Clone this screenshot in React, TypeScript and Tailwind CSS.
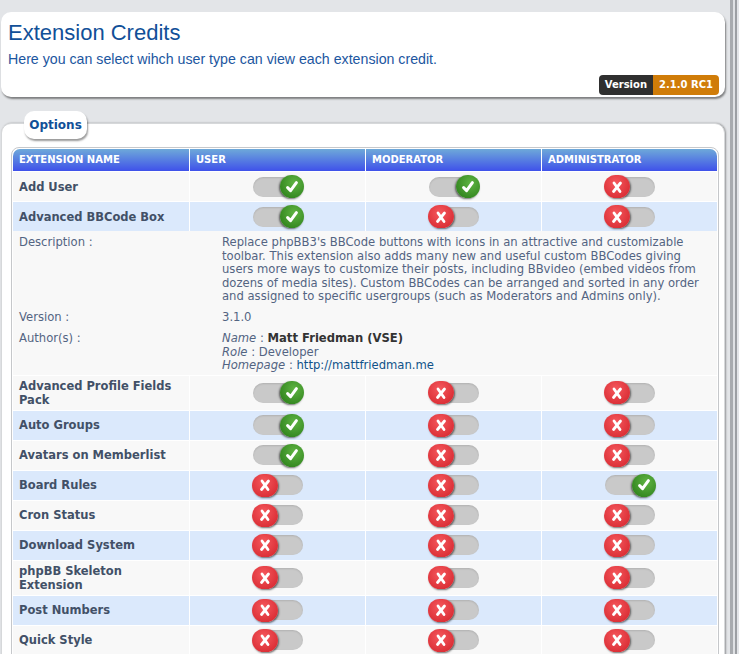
import React from "react";

type Row = { name: string; v: [boolean, boolean, boolean]; details?: boolean };

const rows: Row[] = [
  { name: "Add User", v: [true, true, false] },
  { name: "Advanced BBCode Box", v: [true, false, false], details: true },
  { name: "Advanced Profile Fields Pack", v: [true, false, false] },
  { name: "Auto Groups", v: [true, false, false] },
  { name: "Avatars on Memberlist", v: [true, false, false] },
  { name: "Board Rules", v: [false, false, true] },
  { name: "Cron Status", v: [false, false, false] },
  { name: "Download System", v: [false, false, false] },
  { name: "phpBB Skeleton Extension", v: [false, false, false] },
  { name: "Post Numbers", v: [false, false, false] },
  { name: "Quick Style", v: [false, false, false] },
];

function Toggle({ on }: { on: boolean }) {
  return (
    <div
      className={`flex h-[20px] w-[50px] items-center rounded-full bg-[#c9c9c9] shadow-[inset_0_1px_2px_rgba(0,0,0,0.12)] ${
        on ? "justify-end" : "justify-start"
      }`}
    >
      {on ? (
        <div className="-mr-px flex h-[23px] w-[24px] items-center justify-center rounded-full bg-[radial-gradient(circle_at_60%_35%,#5fb443,#348720_75%)] shadow-[-1px_1px_2px_rgba(0,0,0,0.55)]">
          <svg width="16" height="16" viewBox="0 0 16 16">
            <path d="M3.6 8.6 L6.6 11.6 L12.4 3.6" fill="none" stroke="#fff" strokeWidth="3" strokeLinecap="round" strokeLinejoin="round" />
          </svg>
        </div>
      ) : (
        <div className="-ml-px flex h-[23px] w-[26px] items-center justify-center rounded-full bg-[radial-gradient(circle_at_45%_35%,#f5585d,#db2f36_75%)] shadow-[1px_1px_2px_rgba(0,0,0,0.55)]">
          <svg width="14" height="14" viewBox="0 0 14 14">
            <path d="M4 3 L10 11.5 M10.5 3 L3.5 11.5" fill="none" stroke="#fff" strokeWidth="2.8" strokeLinecap="round" />
          </svg>
        </div>
      )}
    </div>
  );
}

function Details() {
  return (
    <div className="bg-[#f8f8f8] px-[6px] pb-[2px] pt-[5px] text-[11.6px] leading-[13.5px] text-[#536482]">
      <div className="flex">
        <div className="w-[203px] shrink-0">Description :</div>
        <div className="w-[484px]">
          Replace phpBB3's BBCode buttons with icons in an attractive and customizable toolbar. This extension also adds many new and useful custom BBCodes giving users more ways to customize their posts, including BBvideo (embed videos from dozens of media sites). Custom BBCodes can be arranged and sorted in any order and assigned to specific usergroups (such as Moderators and Admins only).
        </div>
      </div>
      <div className="mt-[7px] flex">
        <div className="w-[203px] shrink-0">Version :</div>
        <div>3.1.0</div>
      </div>
      <div className="mt-[8px] flex">
        <div className="w-[203px] shrink-0">Author(s) :</div>
        <div>
          <div>
            <i>Name</i> : <b className="text-[#333]">Matt Friedman (VSE)</b>
          </div>
          <div>
            <i>Role</i> : Developer
          </div>
          <div>
            <i>Homepage</i> : <span className="text-[#105289]">http://mattfriedman.me</span>
          </div>
        </div>
      </div>
    </div>
  );
}

export default function App() {
  return (
    <div className="flex h-[654px] w-[739px] overflow-hidden bg-[#e3e5e8] font-['DejaVu_Sans',Verdana,sans-serif]">
      <div className="ml-px w-[724px] shrink-0 pt-[12px]">
        {/* Header panel */}
        <div className="h-[85px] rounded-[10px] bg-white pl-[7px] pr-[6px] pt-[8px] shadow-[1px_2px_2px_rgba(0,0,0,0.45)]">
          <h1 className="font-['Liberation_Sans',Arial,sans-serif] text-[22px] leading-[26px] text-[#115098]">
            Extension Credits
          </h1>
          <p className="mt-[5px] font-['Liberation_Sans',Arial,sans-serif] text-[14.2px] leading-[16px] text-[#1c56a0]">
            Here you can select wihch user type can view each extension credit.
          </p>
          <div className="mt-[8px] flex justify-end">
            <div className="flex h-[20px] overflow-hidden rounded-[4px] text-[10px] font-bold leading-[20px] text-white">
              <span className="bg-[#2f2f2f] px-[6px]">Version</span>
              <span className="bg-[#d07c08] px-[6px]">2.1.0 RC1</span>
            </div>
          </div>
        </div>

        {/* Options tab */}
        <div className="relative z-10 ml-[23px] mt-[14px] flex h-[28px] w-[63px] items-center justify-center rounded-[10px] bg-white text-[12px] font-bold text-[#115098] shadow-[1px_2px_2px_rgba(0,0,0,0.4)]">
          Options
        </div>

        {/* Options panel */}
        <div className="-mt-[16px] h-[560px] rounded-t-[10px] border border-[#d6d8da] bg-white pl-[9px] pr-[4px] pt-[23px] shadow-[1px_0_2px_rgba(0,0,0,0.35)]">
          <div className="w-[708px] rounded-t-[8px] border border-[#c6c8cb] p-px">
            <div className="grid h-[22px] grid-cols-[176px_176px_176px_176px] rounded-t-[7px] bg-[linear-gradient(#6ea9d9,#3f51ea)] text-[10px] font-bold uppercase leading-[22px] text-white">
              <div className="pl-[6px]">Extension Name</div>
              <div className="border-l border-white pl-[6px]">User</div>
              <div className="border-l border-white pl-[6px]">Moderator</div>
              <div className="border-l border-white pl-[6px]">Administrator</div>
            </div>
            {rows.map((r, i) => (
              <React.Fragment key={r.name}>
                <div
                  className={`grid min-h-[30px] grid-cols-[176px_176px_176px_176px] ${
                    i % 2 === 1 ? "bg-[#dbe9fc]" : "bg-[#f8f8f8]"
                  } border-t border-white`}
                >
                  <div className="flex items-center px-[6px] py-[3px] text-[11.5px] font-bold leading-[14px] text-[#425067]">
                    {r.name}
                  </div>
                  {r.v.map((on, j) => (
                    <div key={j} className="flex items-center justify-center border-l border-white">
                      <Toggle on={on} />
                    </div>
                  ))}
                </div>
                {r.details && <Details />}
              </React.Fragment>
            ))}
          </div>
        </div>
      </div>
      <div className="ml-[5px] h-full w-[3px] bg-[#a8abaf]" />
      <div className="h-full w-[2px] bg-[#dfe1e4]" />
      <div className="h-full w-[2px] bg-[#9c9fa3]" />
    </div>
  );
}
